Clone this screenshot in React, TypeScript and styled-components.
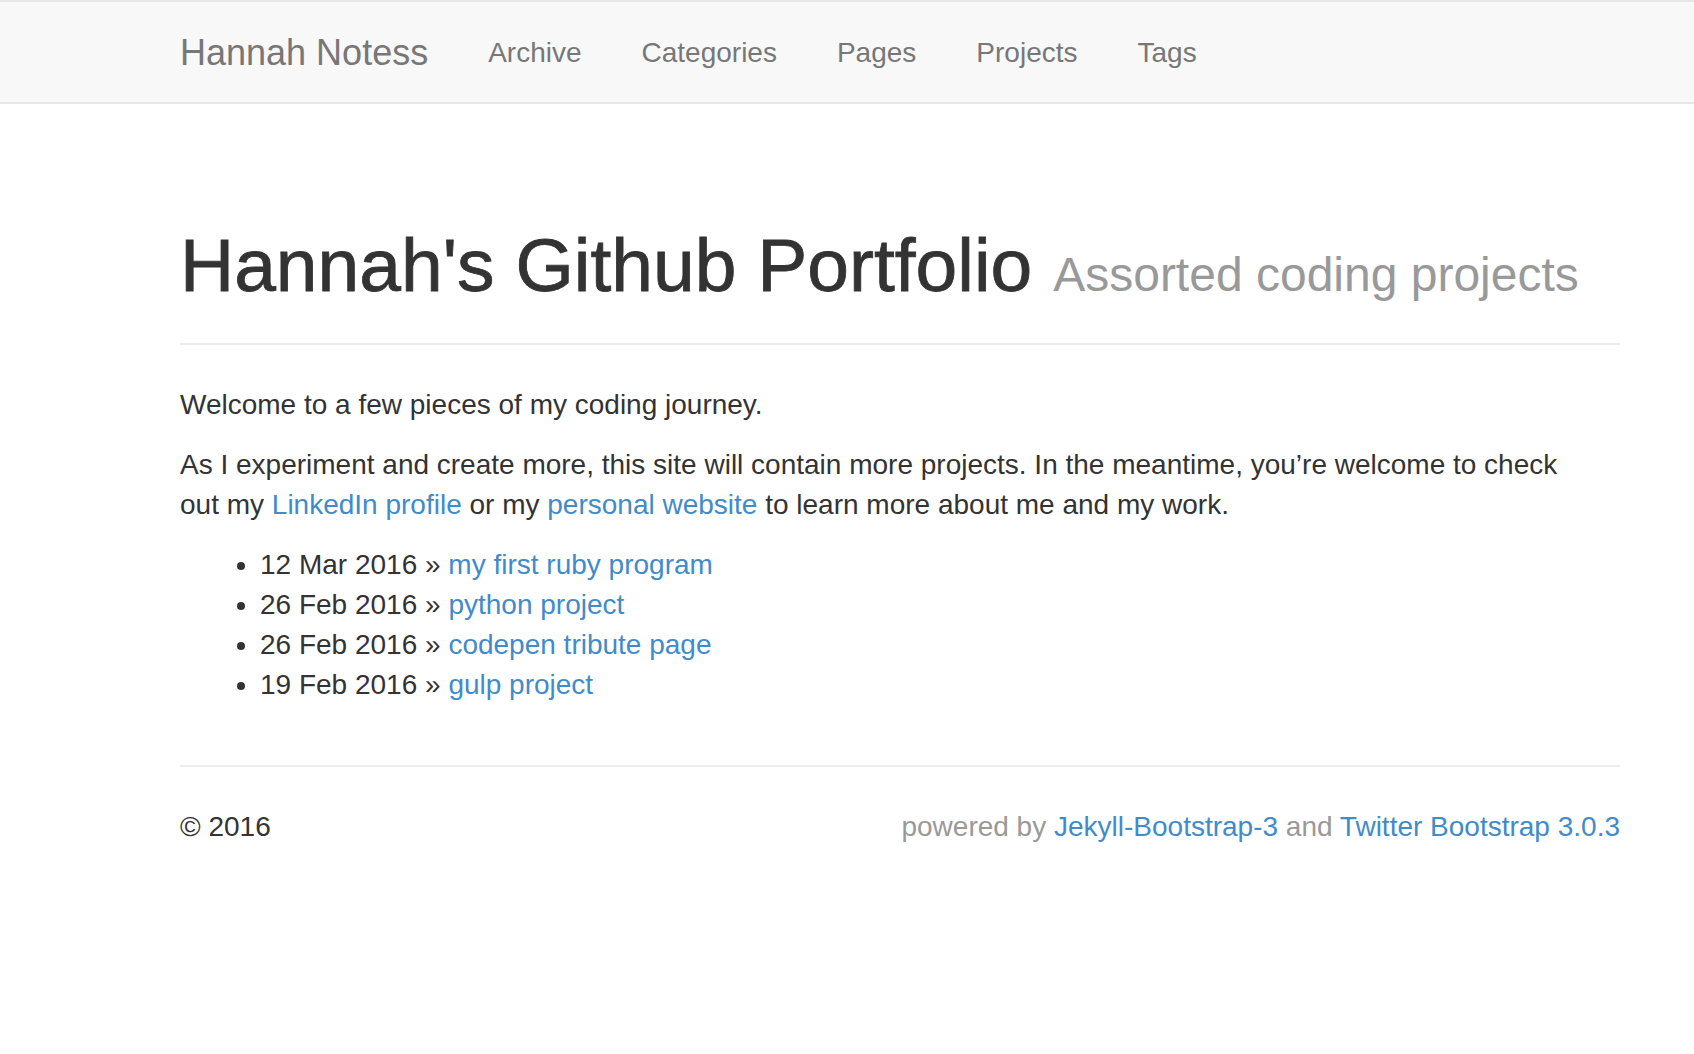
import React from "react";
import styled, { createGlobalStyle } from "styled-components";

const GlobalStyle = createGlobalStyle`
  html, body {
    margin: 0;
    padding: 0;
    background: #ffffff;
  }
  body {
    font-family: "Liberation Sans", Helvetica, Arial, sans-serif;
    font-size: 28px;
    line-height: 40px;
    color: #333333;
  }
  * { box-sizing: border-box; }
`;

const Navbar = styled.nav`
  background: #f8f8f8;
  border-top: 2px solid #e7e7e7;
  border-bottom: 2px solid #e7e7e7;
`;

const Container = styled.div`
  width: 1500px;
  margin-left: 150px;
  padding: 0 30px;
`;

const NavRow = styled(Container)`
  display: flex;
  align-items: center;
`;

const Brand = styled.a`
  font-size: 36px;
  line-height: 40px;
  padding: 31px 30px 29px 0;
  color: #777777;
  text-decoration: none;
`;

const NavList = styled.ul`
  display: flex;
  list-style: none;
  margin: 0;
  padding: 0;
`;

const NavLink = styled.a`
  display: block;
  font-size: 28px;
  line-height: 40px;
  padding: 31px 30px 29px;
  color: #777777;
  text-decoration: none;
`;

const PageHeader = styled.div`
  margin: 122px 0 40px;
  padding-bottom: 18px;
  border-bottom: 2px solid #eeeeee;
`;

const Title = styled.h1`
  margin: 0 0 20px;
  font-size: 75px;
  line-height: 79px;
  font-weight: 400;
  color: #333333;
  white-space: nowrap;
  -webkit-text-stroke: 0.8px #333333;
`;

const Subtitle = styled.small`
  font-size: 48px;
  line-height: 1;
  color: #999999;
  -webkit-text-stroke: 0;
`;

const Paragraph = styled.p`
  margin: 0 0 20px;
  max-width: 1415px;
`;

const Link = styled.a`
  color: #428bca;
  text-decoration: none;
`;

const PostList = styled.ul`
  margin: 0 0 20px;
  padding-left: 80px;
`;

const Footer = styled.footer`
  margin-top: 60px;
  padding-top: 40px;
  border-top: 2px solid #eeeeee;
  display: flex;
  justify-content: space-between;
`;

const Muted = styled.span`
  color: #999999;
`;

const posts = [
  { date: "12 Mar 2016", title: "my first ruby program" },
  { date: "26 Feb 2016", title: "python project" },
  { date: "26 Feb 2016", title: "codepen tribute page" },
  { date: "19 Feb 2016", title: "gulp project" },
];

const navItems = ["Archive", "Categories", "Pages", "Projects", "Tags"];

export default function App() {
  return (
    <>
      <GlobalStyle />
      <Navbar>
        <NavRow>
          <Brand href="#">Hannah Notess</Brand>
          <NavList>
            {navItems.map((n) => (
              <li key={n}>
                <NavLink href="#">{n}</NavLink>
              </li>
            ))}
          </NavList>
        </NavRow>
      </Navbar>
      <Container>
        <PageHeader>
          <Title>
            Hannah's Github Portfolio <Subtitle>Assorted coding projects</Subtitle>
          </Title>
        </PageHeader>
        <Paragraph>Welcome to a few pieces of my coding journey.</Paragraph>
        <Paragraph>
          As I experiment and create more, this site will contain more projects. In the
          meantime, you’re welcome to check out my <Link href="#">LinkedIn profile</Link> or
          my <Link href="#">personal website</Link> to learn more about me and my work.
        </Paragraph>
        <PostList>
          {posts.map((p, i) => (
            <li key={i}>
              <span>{p.date}</span> &raquo; <Link href="#">{p.title}</Link>
            </li>
          ))}
        </PostList>
        <Footer>
          <span>&copy; 2016</span>
          <span>
            <Muted>powered by </Muted>
            <Link href="#">Jekyll-Bootstrap-3</Link>
            <Muted> and </Muted>
            <Link href="#">Twitter Bootstrap 3.0.3</Link>
          </span>
        </Footer>
      </Container>
    </>
  );
}
